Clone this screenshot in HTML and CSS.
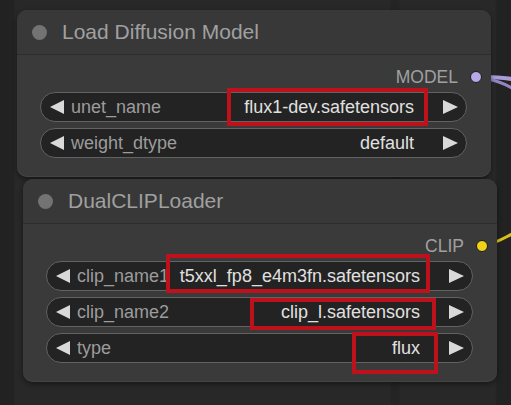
FILE: index.html
```html
<!DOCTYPE html>
<html>
<head>
<meta charset="utf-8">
<link rel="stylesheet" href="styles.css">
</head>
<body>
<div class="canvas">
  <svg class="links" width="511" height="405" viewBox="0 0 511 405">
    <path d="M486 77 C 496 77, 504 78, 512 79" stroke="#a99bd8" stroke-width="4" fill="none"/>
    <path d="M488 79 C 498 81, 505 84, 512 88" stroke="#9385c2" stroke-width="3" fill="none"/>
    <path d="M486 245 C 496 243, 504 238, 512 234" stroke="#d9c01c" stroke-width="3" fill="none"/>
  </svg>

  <div class="node node-a">
    <div class="node-title"><span class="dot"></span><span>Load Diffusion Model</span></div>
    <div class="node-body">
      <div class="output"><span class="out-label">MODEL</span><span class="slot slot-model"></span></div>
      <div class="widgets">
        <div class="widget">
          <span class="arr-l"></span>
          <span class="w-label">unet_name</span>
          <span class="w-value hl hl-unet">flux1-dev.safetensors</span>
          <span class="arr-r"></span>
        </div>
        <div class="widget">
          <span class="arr-l"></span>
          <span class="w-label">weight_dtype</span>
          <span class="w-value">default</span>
          <span class="arr-r"></span>
        </div>
      </div>
    </div>
  </div>

  <div class="node node-b">
    <div class="node-title"><span class="dot"></span><span>DualCLIPLoader</span></div>
    <div class="node-body">
      <div class="output"><span class="out-label">CLIP</span><span class="slot slot-clip"></span></div>
      <div class="widgets">
        <div class="widget">
          <span class="arr-l"></span>
          <span class="w-label">clip_name1</span>
          <span class="w-value hl hl-c1">t5xxl_fp8_e4m3fn.safetensors</span>
          <span class="arr-r"></span>
        </div>
        <div class="widget">
          <span class="arr-l"></span>
          <span class="w-label">clip_name2</span>
          <span class="w-value hl hl-c2">clip_l.safetensors</span>
          <span class="arr-r"></span>
        </div>
        <div class="widget">
          <span class="arr-l"></span>
          <span class="w-label">type</span>
          <span class="w-value hl hl-type">flux</span>
          <span class="arr-r"></span>
        </div>
      </div>
    </div>
  </div>
</div>
</body>
</html>
```

FILE: styles.css
```css
html, body {
  margin: 0;
  padding: 0;
}
body {
  width: 511px;
  height: 405px;
  overflow: hidden;
  font-family: "Liberation Sans", Arial, sans-serif;
  background:
    linear-gradient(to right,
      #222222 0px, #232323 14px, #282828 15px, #282828 390px,
      #242424 391px, #242424 399px, #282828 400px, #282828 495px,
      #222222 497px, #222222 511px);
}
.canvas {
  position: relative;
  padding: 10px 0 0 17px;
}
.links {
  position: absolute;
  left: 0;
  top: 0;
  z-index: 0;
}
.node {
  position: relative;
  z-index: 1;
  width: 474px;
  box-sizing: border-box;
  border-radius: 10px;
  background: #3a3a3a;
  box-shadow: 0 2px 5px rgba(0, 0, 0, 0.45), inset 0 -1px 0 #454545;
}
.node-a {
  height: 167px;
}
.node-b {
  height: 203px;
  margin: 2px 0 0 6px;
}
.node-title {
  height: 44px;
  display: flex;
  align-items: center;
  gap: 15px;
  padding-left: 15px;
  font-size: 21px;
  color: #a0a0a0;
  background: #383838;
  border-radius: 10px 10px 0 0;
  border-bottom: 1px solid #2d2d2d;
}
.dot {
  width: 15px;
  height: 15px;
  border-radius: 50%;
  background: #737373;
  flex: none;
}
.node-body {
  padding: 12px 24px 0 23px;
}
.output {
  height: 20px;
  display: flex;
  justify-content: flex-end;
  align-items: center;
  gap: 12px;
  margin: 0 -15px 5px 0;
}
.out-label {
  font-size: 17.5px;
  color: #a0a0a0;
}
.slot {
  width: 12px;
  height: 12px;
  border-radius: 50%;
  box-sizing: border-box;
  border: 1.5px solid #1c1c1c;
  flex: none;
}
.slot-model {
  background: #b7a8e8;
}
.slot-clip {
  background: #f2d218;
}
.widgets {
  display: flex;
  flex-direction: column;
  gap: 6px;
}
.widget {
  height: 30px;
  box-sizing: border-box;
  border: 1px solid #626262;
  border-radius: 15px;
  background: #232323;
  display: flex;
  align-items: center;
  padding: 0 8px 0 9px;
  font-size: 18px;
  line-height: 28px;
}
.arr-l {
  width: 0;
  height: 0;
  border-top: 7.5px solid transparent;
  border-bottom: 7.5px solid transparent;
  border-right: 14px solid #d9d9d9;
  flex: none;
}
.arr-r {
  width: 0;
  height: 0;
  border-top: 7.5px solid transparent;
  border-bottom: 7.5px solid transparent;
  border-left: 15px solid #d9d9d9;
  flex: none;
  margin-left: 29px;
}
.w-label {
  color: #9c9c9c;
  margin-left: 7px;
  white-space: nowrap;
}
.w-value {
  flex: 1;
  text-align: right;
  color: #e0e0e0;
  white-space: nowrap;
}
.hl {
  flex: none;
  margin-left: auto;
  position: relative;
}
.hl::after {
  content: "";
  position: absolute;
  border: 4px solid #bd111b;
}
.hl-unet::after {
  top: -5px;
  bottom: -5px;
  left: -17px;
  right: -14px;
}
.hl-c1::after {
  top: -8px;
  bottom: -3px;
  left: -14px;
  right: -10px;
}
.hl-c2::after {
  top: 0px;
  bottom: -4px;
  left: -31px;
  right: -16px;
}
.hl-type::after {
  top: -2px;
  bottom: -12px;
  left: -40px;
  right: -18px;
}
```
